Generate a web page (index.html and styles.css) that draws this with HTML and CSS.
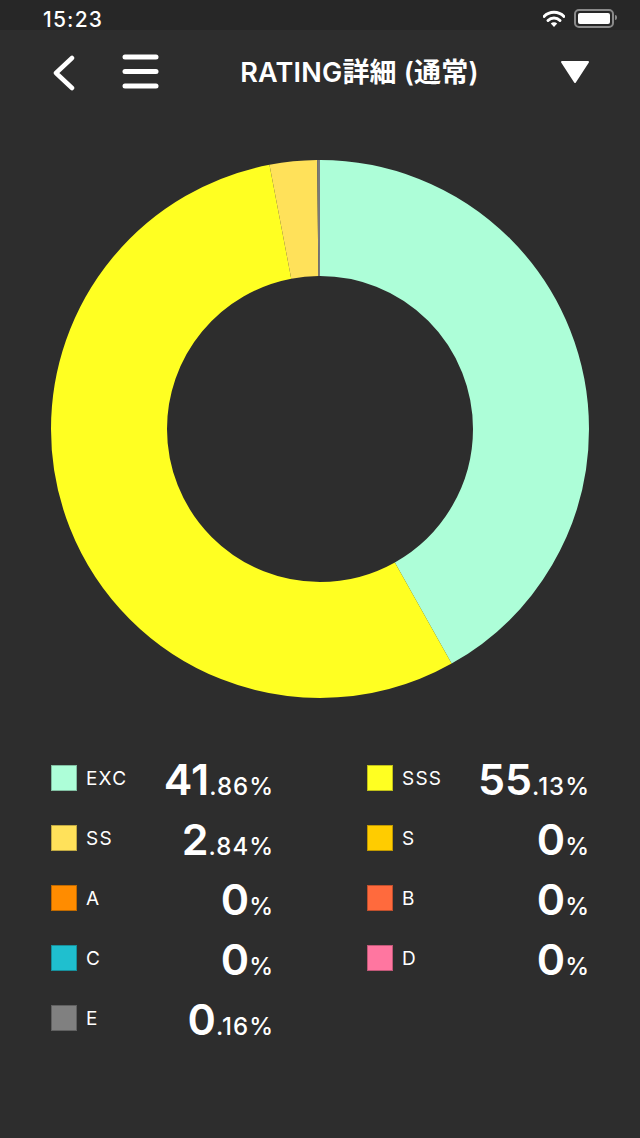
FILE: index.html
```html
<!DOCTYPE html>
<html lang="ja">
<head>
  <meta charset="UTF-8">
  <meta name="viewport" content="width=device-width, initial-scale=1.0">
  <title>RATING詳細</title>
  <link rel="stylesheet" href="styles.css">
</head>
<body>
  <div class="status-bar">
    <span class="time">15:23</span>
    <div class="status-icons">
      <svg class="wifi" width="22" height="18" viewBox="0 0 22 18">
        <path d="M1 6.5 A14 14 0 0 1 21 6.5" fill="none" stroke="#fff" stroke-width="3" stroke-linecap="round"/>
        <path d="M5 10.5 A8.5 8.5 0 0 1 17 10.5" fill="none" stroke="#fff" stroke-width="3" stroke-linecap="round"/>
        <path d="M11 17 L7.8 13.6 A4.5 4.5 0 0 1 14.2 13.6 Z" fill="#fff"/>
      </svg>
      <div class="battery"><div class="battery-fill"></div></div>
    </div>
  </div>

  <header class="nav">
    <svg class="icon-back" width="24" height="36" viewBox="0 0 24 36">
      <path d="M20 3 L4 18 L20 33" fill="none" stroke="#fff" stroke-width="4.5" stroke-linecap="round" stroke-linejoin="round"/>
    </svg>
    <svg class="icon-menu" width="37" height="36" viewBox="0 0 37 36">
      <line x1="3" y1="3" x2="34" y2="3" stroke="#fff" stroke-width="5" stroke-linecap="round"/>
      <line x1="3" y1="17.5" x2="34" y2="17.5" stroke="#fff" stroke-width="5" stroke-linecap="round"/>
      <line x1="3" y1="32" x2="34" y2="32" stroke="#fff" stroke-width="5" stroke-linecap="round"/>
    </svg>
    <h1 class="title">RATING詳細 (通常)</h1>
    <svg class="icon-drop" width="30" height="24" viewBox="0 0 30 24">
      <path d="M2 2 L28 2 L15 22 Z" fill="#fff" stroke="#fff" stroke-width="2" stroke-linejoin="round"/>
    </svg>
  </header>

  <div class="chart">
    <svg width="540" height="540" viewBox="0 0 540 540">
      <g transform="rotate(-90 270 270)" fill="none" stroke-width="116">
        <circle cx="270" cy="270" r="211" pathLength="100" stroke="#adfed8" stroke-dasharray="41.86 100" stroke-dashoffset="0"/>
        <circle cx="270" cy="270" r="211" pathLength="100" stroke="#ffff22" stroke-dasharray="55.13 100" stroke-dashoffset="-41.86"/>
        <circle cx="270" cy="270" r="211" pathLength="100" stroke="#ffe15a" stroke-dasharray="2.84 100" stroke-dashoffset="-96.99"/>
        <circle cx="270" cy="270" r="211" pathLength="100" stroke="#7a7a7a" stroke-dasharray="0.17 100" stroke-dashoffset="-99.83"/>
      </g>
    </svg>
  </div>

  <div class="legend">
    <div class="item">
      <span class="swatch exc"></span><span class="label">EXC</span>
      <span class="value"><span class="int">41</span><span class="frac">.86%</span></span>
    </div>
    <div class="item">
      <span class="swatch sss"></span><span class="label">SSS</span>
      <span class="value"><span class="int">55</span><span class="frac">.13%</span></span>
    </div>
    <div class="item">
      <span class="swatch ss"></span><span class="label">SS</span>
      <span class="value"><span class="int">2</span><span class="frac">.84%</span></span>
    </div>
    <div class="item">
      <span class="swatch s"></span><span class="label">S</span>
      <span class="value"><span class="int">0</span><span class="frac">%</span></span>
    </div>
    <div class="item">
      <span class="swatch a"></span><span class="label">A</span>
      <span class="value"><span class="int">0</span><span class="frac">%</span></span>
    </div>
    <div class="item">
      <span class="swatch b"></span><span class="label">B</span>
      <span class="value"><span class="int">0</span><span class="frac">%</span></span>
    </div>
    <div class="item">
      <span class="swatch c"></span><span class="label">C</span>
      <span class="value"><span class="int">0</span><span class="frac">%</span></span>
    </div>
    <div class="item">
      <span class="swatch d"></span><span class="label">D</span>
      <span class="value"><span class="int">0</span><span class="frac">%</span></span>
    </div>
    <div class="item">
      <span class="swatch e"></span><span class="label">E</span>
      <span class="value"><span class="int">0</span><span class="frac">.16%</span></span>
    </div>
  </div>
</body>
</html>
```

FILE: styles.css
```css
body {
  margin: 0;
  background-color: #2d2d2d;
  color: #fff;
  font-family: Inter, "Noto Sans CJK JP", sans-serif;
}

.status-bar {
  height: 30px;
  background-color: #272727;
  display: flex;
  align-items: center;
  justify-content: space-between;
  padding: 0 26px 0 43px;
}

.time {
  font-size: 21px;
  font-weight: 500;
  letter-spacing: 1.2px;
  margin-top: 8px;
}

.status-icons {
  display: flex;
  align-items: center;
  gap: 9px;
  margin-top: 7px;
}

.battery {
  position: relative;
  box-sizing: content-box;
  width: 32px;
  height: 11px;
  border: 2px solid #8a8a8a;
  border-radius: 5px;
  padding: 2px;
}

.battery::after {
  content: "";
  position: absolute;
  right: -5px;
  top: 4px;
  width: 2px;
  height: 5px;
  background: #8a8a8a;
  border-radius: 0 2px 2px 0;
}

.battery-fill {
  width: 100%;
  height: 100%;
  background: #fff;
  border-radius: 2px;
}

.nav {
  height: 84px;
  display: flex;
  align-items: center;
  padding: 0 50px 0 52px;
}

.icon-back {
  margin-right: 46px;
  margin-top: 1px;
}

.title {
  flex: 1;
  margin: 0 0 4px;
  text-align: center;
  font-size: 27px;
  font-weight: 600;
  letter-spacing: 0.2px;
}

.chart {
  display: flex;
  justify-content: center;
  padding-top: 45px;
}

.chart svg {
  display: block;
}

.legend {
  display: grid;
  grid-template-columns: 223px 223px;
  column-gap: 93px;
  padding: 49px 0 0 51px;
}

.item {
  height: 60px;
  display: flex;
  align-items: center;
}

.swatch {
  width: 26px;
  height: 26px;
  box-sizing: border-box;
  border: 1px solid rgba(0, 0, 0, 0.25);
}

.label {
  margin-left: 9px;
  font-size: 19px;
  letter-spacing: 1.2px;
}

.value {
  flex: 1;
  text-align: right;
  line-height: 1;
  white-space: nowrap;
  margin-top: 2px;
}

.int {
  font-size: 43px;
  font-weight: 600;
}

.frac {
  font-size: 24px;
  font-weight: 500;
  letter-spacing: 1px;
}

.exc { background-color: #adfed8; }
.sss { background-color: #ffff22; }
.ss { background-color: #ffe15a; }
.s { background-color: #ffcc00; }
.a { background-color: #ff8c00; }
.b { background-color: #ff6a3d; }
.c { background-color: #1fbfcf; }
.d { background-color: #ff76a0; }
.e { background-color: #808080; }
```
